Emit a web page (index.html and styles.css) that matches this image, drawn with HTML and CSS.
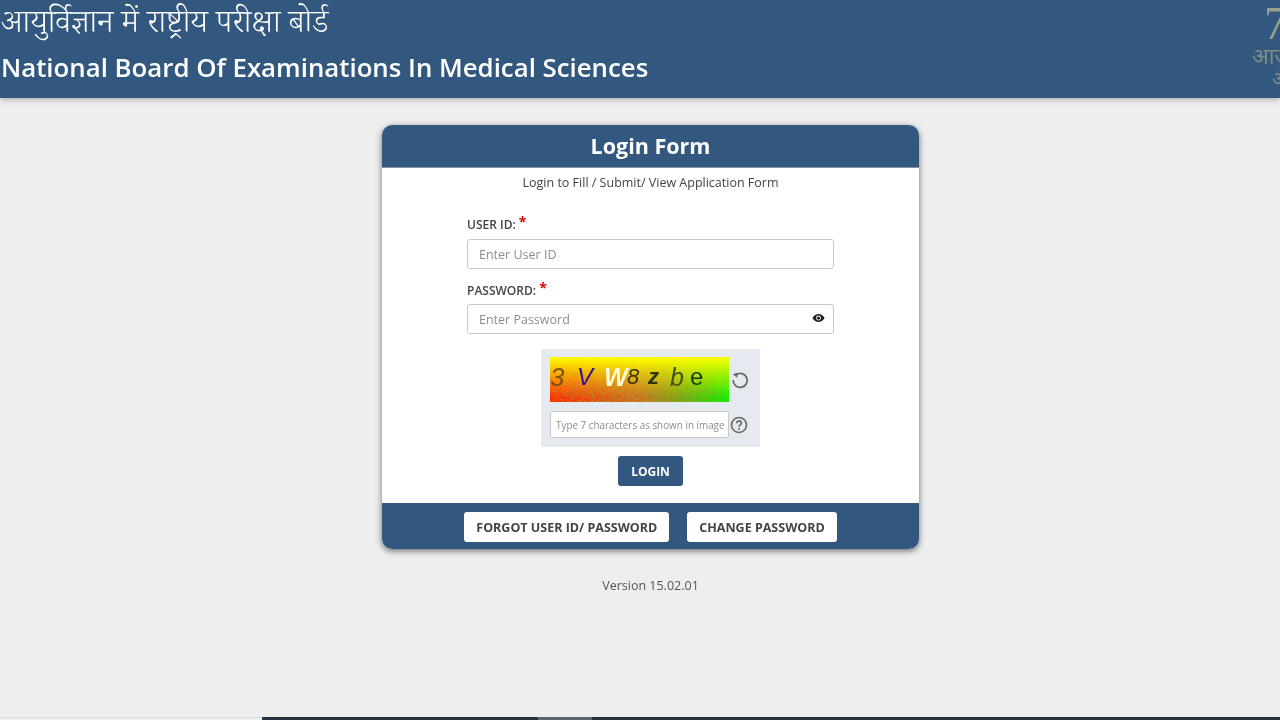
FILE: index.html
```html
<!DOCTYPE html>
<html lang="hi">
<head>
    <meta charset="UTF-8">
    <meta name="viewport" content="width=device-width, initial-scale=1.0">
    <title>Login Form</title>
    <link rel="stylesheet" href="styles.css">
</head>
<body>

    <header class="banner">
        <div class="banner-titulos">
            <div class="banner-hindi">आयुर्विज्ञान में राष्ट्रीय परीक्षा बोर्ड</div>
            <div class="banner-ingles">National Board Of Examinations In Medical Sciences</div>
        </div>
        <div class="banner-logo">
            <div class="logo-numero">75</div>
            <div class="logo-texto">आज़ादी</div>
            <div class="logo-texto logo-texto-2">अमृत</div>
        </div>
    </header>

    <main class="contenido">
        <section class="tarjeta">
            <h1 class="tarjeta-titulo">Login Form</h1>
            <div class="tarjeta-cuerpo">
                <p class="subtitulo">Login to Fill / Submit/ View Application Form</p>

                <div class="campos">
                    <label class="etiqueta" for="usuario">USER ID: <span class="requerido">*</span></label>
                    <input class="entrada" id="usuario" type="text" placeholder="Enter User ID">

                    <label class="etiqueta etiqueta-clave" for="clave">PASSWORD: <span class="requerido">*</span></label>
                    <div class="entrada-clave">
                        <input class="entrada" id="clave" type="password" placeholder="Enter Password">
                        <svg class="ojo" viewBox="0 0 16 12" width="13" height="10">
                            <path d="M0.5 6C2.5 2.6 5 1 8 1s5.500 1.600 7.500 5c-2 3.400-4.500 5-7.500 5S2.500 9.400 0.500 6z" fill="#222"/>
                            <circle cx="8" cy="6" r="3" fill="#fff"/>
                            <circle cx="8" cy="6" r="2" fill="#222"/>
                        </svg>
                    </div>
                </div>

                <div class="captcha">
                    <div class="captcha-fila captcha-fila-imagen">
                        <div class="captcha-imagen">
                            <svg class="captcha-ruido" width="179" height="45">
                                <filter id="grano">
                                    <feTurbulence type="fractalNoise" baseFrequency="0.9" numOctaves="2" seed="4"/>
                                    <feColorMatrix values="0 0 0 0 0.45  0 0 0 0 0.3  0 0 0 0 0.05  0 0 0 5 -2.4"/>
                                </filter>
                                <linearGradient id="velo" x1="0" y1="0" x2="0" y2="1">
                                    <stop offset="0.15" stop-color="#000"/>
                                    <stop offset="0.8" stop-color="#fff"/>
                                </linearGradient>
                                <linearGradient id="velo-h" x1="0" y1="0" x2="1" y2="0">
                                    <stop offset="0" stop-color="#888"/>
                                    <stop offset="0.5" stop-color="#fff"/>
                                    <stop offset="1" stop-color="#333"/>
                                </linearGradient>
                                <mask id="mascara">
                                    <rect width="179" height="45" fill="url(#velo-h)"/>
                                    <rect width="179" height="45" fill="url(#velo)" style="mix-blend-mode: multiply"/>
                                </mask>
                                <g mask="url(#mascara)">
                                    <rect width="179" height="45" filter="url(#grano)"/>
                                </g>
                            </svg>
                            <span class="c1">3</span>
                            <span class="c2">V</span>
                            <span class="c3">W</span>
                            <span class="c4">8</span>
                            <span class="c5">z</span>
                            <span class="c6">b</span>
                            <span class="c7">e</span>
                        </div>
                        <svg class="captcha-icono" viewBox="0 0 20 20" width="20" height="20">
                            <path d="M6 4.800A7 7 0 1 1 3.200 10" fill="none" stroke="#666" stroke-width="1.700"/>
                            <path d="M2.800 4.200L7.600 2.800L7.200 7.800z" fill="#666"/>
                        </svg>
                    </div>
                    <div class="captcha-fila">
                        <input class="captcha-entrada" type="text" placeholder="Type 7 characters as shown in image">
                        <svg class="captcha-icono" viewBox="0 0 20 20" width="20" height="20">
                            <circle cx="10" cy="10" r="7.500" fill="none" stroke="#666" stroke-width="1.600"/>
                            <path d="M7.700 8.200c0-3 4.700-3 4.700-.2 0 1.900-2.400 1.900-2.400 3.800" fill="none" stroke="#666" stroke-width="1.600"/>
                            <circle cx="10" cy="14" r="1" fill="#666"/>
                        </svg>
                    </div>
                </div>

                <div class="acciones">
                    <button class="boton-login">LOGIN</button>
                </div>
            </div>
            <div class="tarjeta-pie">
                <button class="boton-blanco">FORGOT USER ID/ PASSWORD</button>
                <button class="boton-blanco">CHANGE PASSWORD</button>
            </div>
        </section>
        <div class="version">Version 15.02.01</div>
    </main>

    <div class="barra-inferior">
        <div class="barra-oscura"><div class="barra-claro"></div></div>
    </div>

</body>
</html>
```

FILE: styles.css
```css
* {
    box-sizing: border-box;
}

body {
    font-family: "Open Sans", "Noto Sans", Arial, sans-serif;
    display: flex;
    flex-direction: column;
    min-height: 100vh;
    height: 100vh;
    overflow: hidden;
    background-color: #eeeeee;
    color: #444;
    margin: 0;
}

.banner {
    display: flex;
    justify-content: space-between;
    height: 98px;
    flex-shrink: 0;
    background-color: #32587f;
    box-shadow: 0 2px 5px rgba(0, 0, 0, 0.25);
    overflow: hidden;
}

.banner-titulos {
    padding: 3px 0 0 1px;
    color: #fff;
}

.banner-hindi {
    font-family: "Noto Serif Devanagari", "Noto Sans Devanagari", "Noto Sans", serif;
    font-size: 31.800px;
    font-weight: 300;
    line-height: 44px;
    height: 44px;
    padding-top: 2px;
}

.banner-ingles {
    font-family: "Open Sans", sans-serif;
    font-size: 25.800px;
    font-weight: 600;
    line-height: 36px;
    margin-top: 2px;
    white-space: nowrap;
}

.banner-logo {
    width: 28px;
    padding-top: 2px;
    overflow: hidden;
    color: #98a08c;
    white-space: nowrap;
}

.logo-numero {
    font-family: "Liberation Serif", serif;
    font-size: 46px;
    line-height: 44px;
    margin-left: 12px;
}

.logo-texto {
    font-family: "Noto Sans Devanagari", "Noto Sans", sans-serif;
    font-size: 22px;
    line-height: 26px;
    color: #808b84;
}

.logo-texto-2 {
    margin-left: 20px;
    margin-top: -2px;
    font-size: 20px;
    line-height: 22px;
}

.contenido {
    display: flex;
    flex-direction: column;
    align-items: center;
    padding-top: 27px;
    padding-left: 21px;
    flex: 1;
}

.tarjeta {
    width: 537px;
    border-radius: 10px;
    overflow: hidden;
    background-color: #fff;
    box-shadow: 0 2px 6px rgba(0, 0, 0, 0.55);
}

.tarjeta-titulo {
    height: 43px;
    margin: 0;
    background-color: #32587f;
    border-bottom: 1px solid #8a9199;
    color: #fff;
    font-size: 21.500px;
    font-weight: 700;
    line-height: 42px;
    text-align: center;
}

.tarjeta-cuerpo {
    height: 335px;
    padding-top: 7px;
}

.subtitulo {
    margin: 0;
    height: 16px;
    font-size: 12.500px;
    line-height: 16px;
    text-align: center;
}

.campos {
    width: 367px;
    margin: 23px auto 0;
}

.etiqueta {
    display: block;
    height: 25px;
    font-size: 12px;
    font-weight: 600;
    line-height: 20px;
}

.etiqueta-clave {
    margin-top: 11px;
    height: 23px;
}

.requerido {
    position: relative;
    top: -2px;
    color: #e00000;
    font-size: 14px;
    font-weight: 700;
}

.entrada {
    display: block;
    width: 100%;
    height: 30px;
    padding: 0 11px;
    background-color: #fff;
    border: 1px solid #c8c8c8;
    border-radius: 3px;
    font-family: inherit;
    font-size: 12.500px;
}

.entrada::placeholder,
.captcha-entrada::placeholder {
    color: #8d8d8d;
    opacity: 1;
}

.entrada-clave {
    position: relative;
    margin-top: 1px;
}

.ojo {
    position: absolute;
    top: 9px;
    right: 9px;
}

.captcha {
    width: 219px;
    height: 98px;
    margin: 15px auto 0;
    padding: 8px 0 0 9px;
    background-color: #e4eaef;
}

.captcha-fila {
    display: flex;
    align-items: center;
    margin-bottom: 9px;
}

.captcha-fila-imagen {
    gap: 1px;
}

.captcha-imagen {
    position: relative;
    display: flex;
    align-items: center;
    width: 179px;
    height: 45px;
    padding-bottom: 5px;
    background-image:
        linear-gradient(to bottom, #ffff00 0%, rgba(255, 255, 0, 0) 90%),
        linear-gradient(to right, #ff2a00 0%, #c8701a 50%, #10f000 100%);
    font-size: 22px;
    line-height: 26px;
}

.captcha-ruido {
    position: absolute;
    top: 0;
    left: 0;
}

.captcha-imagen span {
    position: relative;
    font-family: "Liberation Sans", Arial, sans-serif;
    font-style: italic;
}

.c1 { color: #7a5418; width: 27px; font-size: 26px; }
.c2 { color: #2a109c; width: 27px; font-size: 24px; }
.c3 { color: #fffbe0; width: 23px; font-weight: 700; font-size: 25px; }
.c4 { color: #3c3410; width: 21px; }
.c5 { color: #2c3408; width: 22px; font-weight: 700; }
.c6 { color: #445010; width: 20px; font-size: 25px; }
.c7 { color: #143c08; width: 17px; font-size: 24px; font-style: normal !important; }

.captcha-entrada {
    width: 179px;
    height: 27px;
    padding: 0 0 0 5px;
    background-color: #fff;
    border: 1px solid #c8c8c8;
    border-radius: 2px;
    font-family: inherit;
    font-size: 9.900px;
}

.acciones {
    display: flex;
    justify-content: center;
    margin-top: 9px;
}

.boton-login {
    width: 65px;
    height: 30px;
    padding: 0;
    background-color: #32587f;
    border: none;
    border-radius: 3px;
    color: #fff;
    font-family: inherit;
    font-size: 12px;
    font-weight: 700;
}

.tarjeta-pie {
    display: flex;
    justify-content: center;
    gap: 18px;
    height: 46px;
    padding-top: 9px;
    background-color: #32587f;
}

.boton-blanco {
    height: 30px;
    padding: 0 12px;
    background-color: #fff;
    border: none;
    border-radius: 3px;
    color: #444;
    font-family: inherit;
    font-size: 12.500px;
    font-weight: 700;
    white-space: nowrap;
}

.version {
    margin-top: 29px;
    font-size: 12.500px;
    line-height: 16px;
    color: #555;
}

.barra-inferior {
    display: flex;
    justify-content: flex-end;
    height: 3px;
    flex-shrink: 0;
    border-top: 1px solid #dcdcdc;
}

.barra-oscura {
    width: 1018px;
    margin-top: -1px;
    height: 3px;
    padding-left: 276px;
    background-color: #26343f;
}

.barra-claro {
    width: 54px;
    height: 3px;
    background-color: #5c666c;
}
```
